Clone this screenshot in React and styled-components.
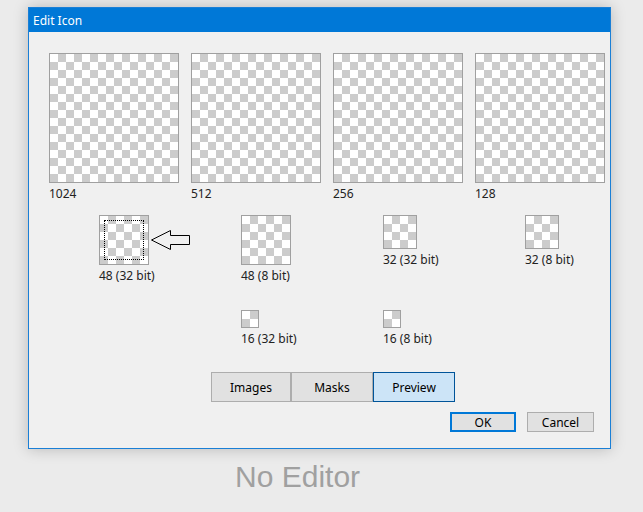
import React from "react";
import styled, { createGlobalStyle } from "styled-components";

const GlobalStyle = createGlobalStyle`
  html, body {
    margin: 0;
    padding: 0;
    background: #ebebeb;
  }
  body {
    font-family: "Noto Sans", "Open Sans", sans-serif;
  }
`;

const Page = styled.div`
  width: 643px;
  height: 512px;
  box-sizing: border-box;
  padding: 7px 0 0 28px;
  overflow: hidden;
`;

const Window = styled.div`
  width: 583px;
  height: 442px;
  box-sizing: border-box;
  border: 1px solid #1a7fd6;
  background: #f0f0f0;
  box-shadow: 0 0 14px rgba(0, 0, 0, 0.22);
  display: flex;
  flex-direction: column;
`;

const TitleBar = styled.div`
  height: 24px;
  background: #0078d7;
  color: #fff;
  font-size: 12px;
  display: flex;
  align-items: center;
  padding-left: 4px;
`;

const Body = styled.div`
  padding: 21px 0 0 20px;
  display: flex;
  flex-direction: column;
`;

const BigRow = styled.div`
  display: grid;
  grid-template-columns: repeat(4, 130px);
  column-gap: 12px;
`;

const SmallGrid = styled.div`
  display: grid;
  grid-template-columns: repeat(4, 142px);
  grid-template-rows: 95px 36px;
  margin-top: 13px;
  padding-left: 50px;
  align-items: start;
`;

const Item = styled.div`
  display: flex;
  flex-direction: column;
  align-items: flex-start;
`;

const IconRow = styled.div`
  display: flex;
  align-items: center;
`;

const Swatch = styled.div`
  position: relative;
  width: ${(p) => p.size}px;
  height: ${(p) => p.size}px;
  border: 1px solid #a0a0a0;
  background: repeating-conic-gradient(#cccccc 0 25%, #ffffff 0 50%) 0 0 / 16px 16px;
`;

const Focus = styled.div`
  position: absolute;
  inset: 4px;
  border: 1px dotted #000;
`;

const Label = styled.div`
  font-size: 12px;
  line-height: 16px;
  color: #222;
  margin-top: 3px;
`;

const Tabs = styled.div`
  display: flex;
  margin: 26px 0 0 162px;
`;

const Tab = styled.div`
  width: ${(p) => p.w}px;
  height: 30px;
  box-sizing: border-box;
  display: flex;
  align-items: center;
  justify-content: center;
  font-size: 12px;
  color: #000;
  background: ${(p) => (p.active ? "#cce4f7" : "#e1e1e1")};
  border: 1px solid ${(p) => (p.active ? "#005499" : "#adadad")};
`;

const Buttons = styled.div`
  display: flex;
  justify-content: flex-end;
  gap: 11px;
  margin: 10px 16px 0 0;
`;

const Button = styled.div`
  width: ${(p) => p.w}px;
  height: 20px;
  box-sizing: border-box;
  display: flex;
  align-items: center;
  justify-content: center;
  font-size: 12px;
  color: #000;
  background: #e1e1e1;
  border: ${(p) => (p.primary ? "2px solid #0078d7" : "1px solid #adadad")};
`;

const Caption = styled.div`
  margin: 11px 0 0 207px;
  font-family: "Liberation Sans", Arial, sans-serif;
  font-size: 30px;
  line-height: 34px;
  color: #a0a0a0;
`;

const Arrow = () => (
  <svg width="40" height="21" viewBox="0 0 40 21" style={{ marginLeft: 2 }}>
    <path
      d="M0.5 10 L19.5 0.5 L19.5 5.5 L38.5 5.5 L38.5 14.5 L19.5 14.5 L19.5 19.5 Z"
      fill="#f0f0f0"
      stroke="#000"
      strokeWidth="1"
    />
  </svg>
);

const big = ["1024", "512", "256", "128"];

const App = () => {
  return (
    <Page>
      <GlobalStyle />
      <Window>
        <TitleBar>Edit Icon</TitleBar>
        <Body>
          <BigRow>
            {big.map((b) => (
              <Item key={b}>
                <Swatch size={128} />
                <Label>{b}</Label>
              </Item>
            ))}
          </BigRow>
          <SmallGrid>
            <Item>
              <IconRow>
                <Swatch size={48}>
                  <Focus />
                </Swatch>
                <Arrow />
              </IconRow>
              <Label>48 (32 bit)</Label>
            </Item>
            <Item>
              <Swatch size={48} />
              <Label>48 (8 bit)</Label>
            </Item>
            <Item>
              <Swatch size={32} />
              <Label>32 (32 bit)</Label>
            </Item>
            <Item>
              <Swatch size={32} />
              <Label>32 (8 bit)</Label>
            </Item>
            <div />
            <Item>
              <Swatch size={16} />
              <Label>16 (32 bit)</Label>
            </Item>
            <Item>
              <Swatch size={16} />
              <Label>16 (8 bit)</Label>
            </Item>
            <div />
          </SmallGrid>
          <Tabs>
            <Tab w={80}>Images</Tab>
            <Tab w={82}>Masks</Tab>
            <Tab w={82} active>
              Preview
            </Tab>
          </Tabs>
          <Buttons>
            <Button w={66} primary>
              OK
            </Button>
            <Button w={67}>Cancel</Button>
          </Buttons>
        </Body>
      </Window>
      <Caption>No Editor</Caption>
    </Page>
  );
};

export default App;
